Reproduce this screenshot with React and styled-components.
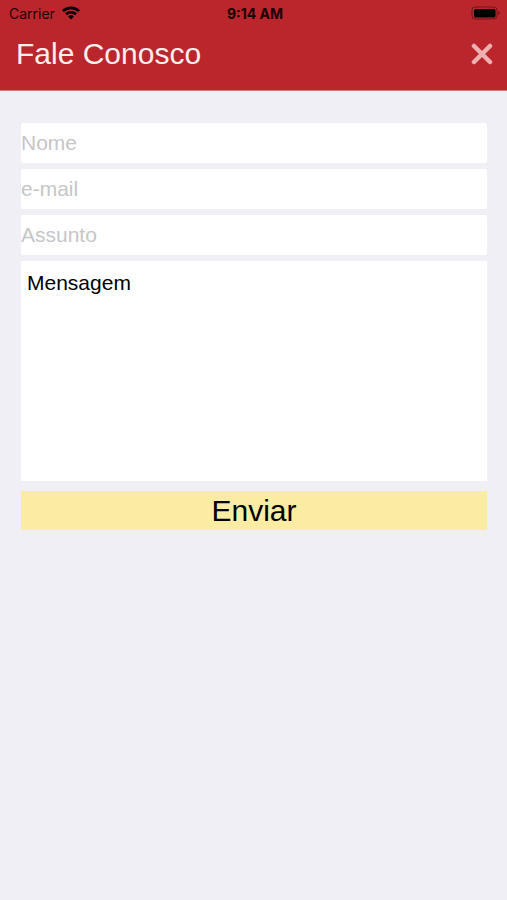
import styled, { createGlobalStyle } from "styled-components";
import { useState } from "react";

const App = () => {
  const [message, setMessage] = useState("Mensagem");

  return (
    <Page>
      <GlobalStyle />
      <Header>
        <StatusBar>
          <Carrier>
            Carrier
            <WifiIcon />
          </Carrier>
          <Time>9:14 AM</Time>
          <Battery>
            <BatteryIcon />
          </Battery>
        </StatusBar>
        <TitleBar>
          <Title>Fale Conosco</Title>
          <CloseButton type="button" aria-label="Fechar">
            <CloseIcon />
          </CloseButton>
        </TitleBar>
      </Header>

      <Form onSubmit={(e) => e.preventDefault()}>
        <Fields>
          <Input type="text" name="nome" placeholder="Nome" aria-label="Nome" />
          <Input
            type="email"
            name="email"
            placeholder="e-mail"
            aria-label="e-mail"
          />
          <Input
            type="text"
            name="assunto"
            placeholder="Assunto"
            aria-label="Assunto"
          />
          <Message
            name="mensagem"
            aria-label="Mensagem"
            value={message}
            onChange={(e) => setMessage(e.target.value)}
          />
        </Fields>
        <SendButton type="submit">Enviar</SendButton>
      </Form>
    </Page>
  );
};

export default App;

const WifiIcon = () => (
  <svg width="18" height="14" viewBox="0 0 18 14" aria-hidden="true">
    <g fill="none" stroke="currentColor" strokeWidth="2.7">
      <path d="M1 5.1a11.4 11.4 0 0 1 16 0" />
      <path d="M4 8.3a7.1 7.1 0 0 1 10 0" />
    </g>
    <path d="M9 13.4l-2.9-3a4.1 4.1 0 0 1 5.8 0z" fill="currentColor" />
  </svg>
);

const BatteryIcon = () => (
  <svg width="30" height="14" viewBox="0 0 30 14" aria-hidden="true">
    <rect
      x="1"
      y="1"
      width="25"
      height="12"
      rx="3"
      fill="none"
      stroke="#000"
      strokeOpacity="0.4"
    />
    <rect x="3" y="3" width="21.5" height="8.5" rx="1.5" fill="#000" />
    <path d="M27.5 5v4a2.2 2.2 0 0 0 0-4z" fill="#000" fillOpacity="0.45" />
  </svg>
);

const CloseIcon = () => (
  <svg width="22" height="22" viewBox="0 0 22 22" aria-hidden="true">
    <path
      d="M3 3l16 16M19 3L3 19"
      stroke="#eeb0b0"
      strokeWidth="4.5"
      strokeLinecap="round"
    />
  </svg>
);

const GlobalStyle = createGlobalStyle`
  * {
    box-sizing: border-box;
  }

  body {
    margin: 0;
    background-color: #f0eff5;
    font-family: "Liberation Sans", Arial, sans-serif;
  }
`;

const Page = styled.div`
  min-height: 100vh;
  background-color: #f0eff5;
`;

const Header = styled.header`
  padding-bottom: 14px;
  background-color: #bb262c;
  border-bottom: 1px solid #d1787d;
`;

const StatusBar = styled.div`
  display: grid;
  grid-template-columns: 1fr auto 1fr;
  align-items: center;
  height: 26px;
  padding: 0 6px 0 9px;
  color: #1c0304;
  font-family: Inter, "Liberation Sans", sans-serif;
  font-size: 14px;
`;

const Carrier = styled.div`
  display: flex;
  align-items: center;
  gap: 7px;

  svg {
    color: #000;
  }
`;

const Time = styled.div`
  font-weight: 700;
`;

const Battery = styled.div`
  display: flex;
  justify-content: flex-end;
`;

const TitleBar = styled.div`
  display: flex;
  justify-content: space-between;
  align-items: center;
  height: 50px;
  padding: 6px 14px 0 16px;
`;

const Title = styled.h1`
  margin: 0;
  color: #fdeeee;
  font-size: 30px;
  font-weight: 400;
  line-height: 36px;
`;

const CloseButton = styled.button`
  display: flex;
  padding: 0;
  border: none;
  background: none;
  cursor: pointer;
`;

const Form = styled.form`
  display: flex;
  flex-direction: column;
  gap: 10px;
  padding: 32px 20px 32px 21px;
`;

const Fields = styled.div`
  display: flex;
  flex-direction: column;
  gap: 6px;
`;

const Input = styled.input`
  width: 100%;
  height: 40px;
  padding: 0;
  border: none;
  border-radius: 2px;
  background-color: #fff;
  color: #000;
  font-family: inherit;
  font-size: 21px;

  &::placeholder {
    color: #c6c6c8;
    opacity: 1;
  }
`;

const Message = styled.textarea`
  display: block;
  width: 100%;
  height: 220px;
  padding: 10px 6px;
  border: none;
  background-color: #fff;
  color: #000;
  font-family: inherit;
  font-size: 21px;
  line-height: 24px;
  resize: none;
`;

const SendButton = styled.button`
  height: 39px;
  padding: 0;
  border: none;
  background-color: #fbeca4;
  color: #000;
  font-family: inherit;
  font-size: 30px;
  line-height: 39px;
  cursor: pointer;
`;
